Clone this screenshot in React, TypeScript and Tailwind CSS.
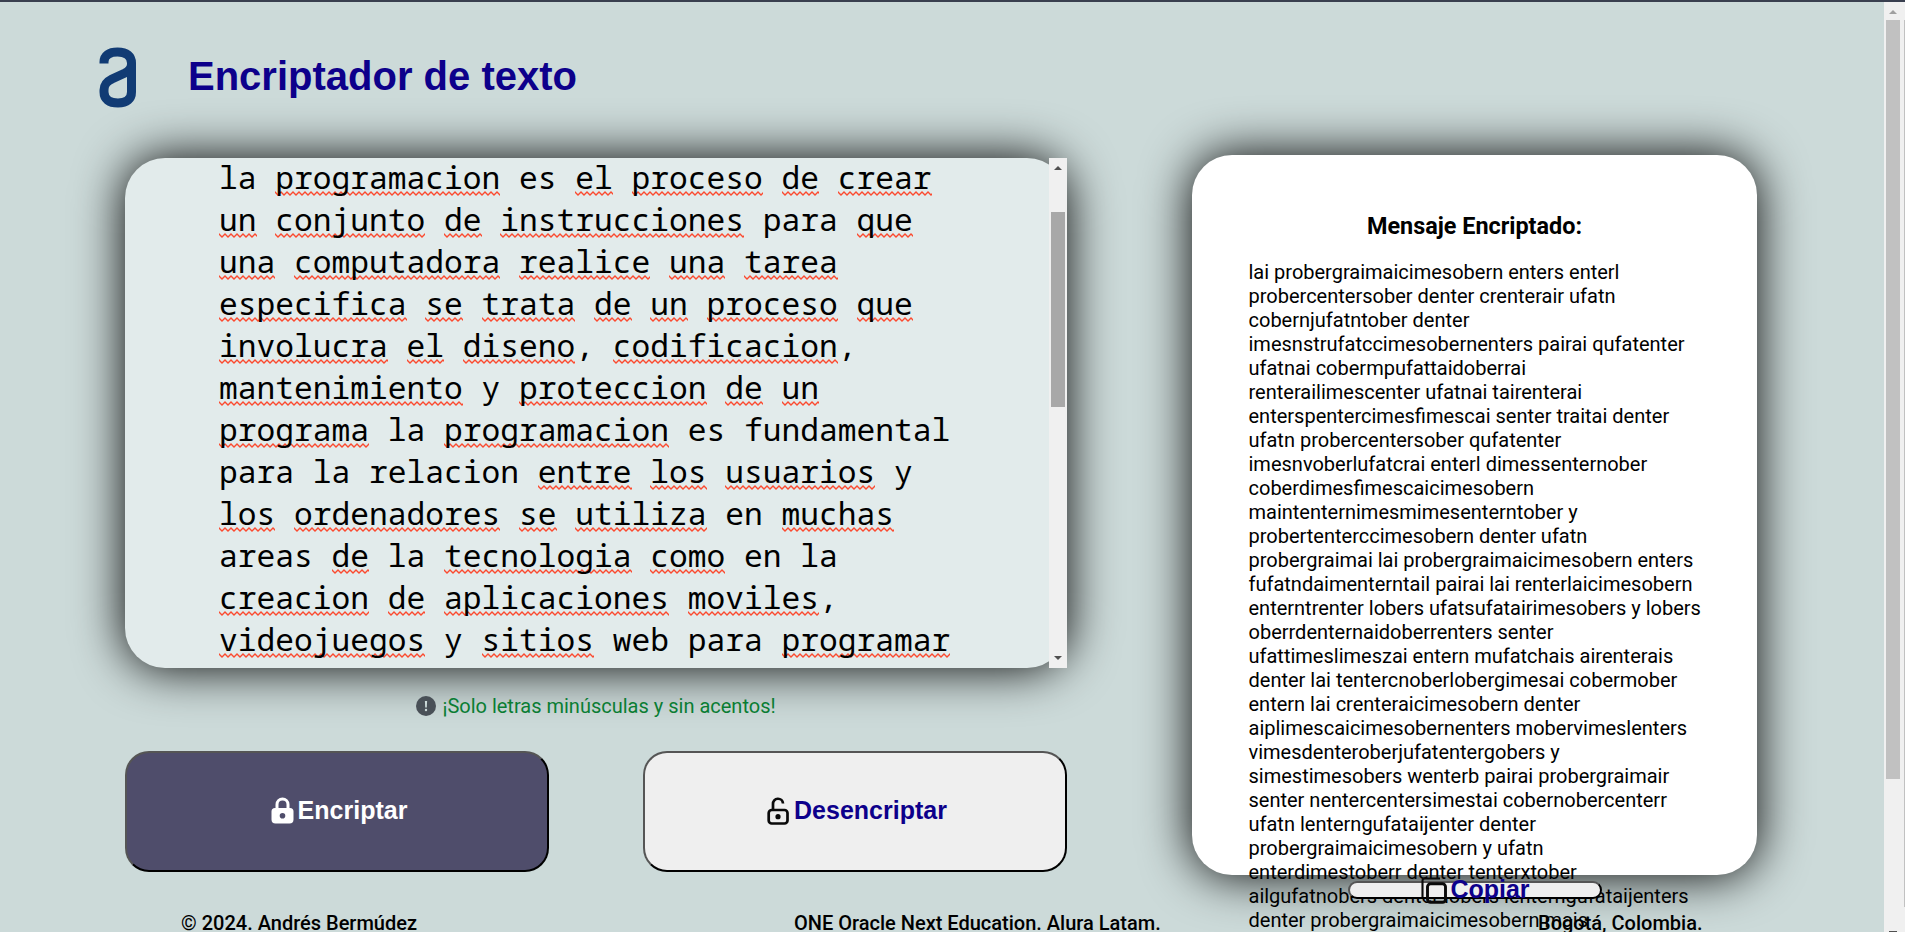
const LINES: string[] = [
  'la *programacion* es *el* *proceso* *de* *crear*',
  '*un* *conjunto* *de* *instrucciones* para *que*',
  '*una* *computadora* *realice* *una* *tarea*',
  '*especifica* *se* *trata* *de* *un* *proceso* *que*',
  '*involucra* *el* *diseno*, *codificacion*,',
  '*mantenimiento* y *proteccion* *de* *un*',
  '*programa* la *programacion* es fundamental',
  'para la relacion *entre* *los* *usuarios* y',
  '*los* *ordenadores* *se* *utiliza* en *muchas*',
  'areas *de* la *tecnologia* *como* en la',
  '*creacion* *de* *aplicaciones* *moviles*,',
  '*videojuegos* y *sitios* web para *programar*',
];

const ENCRYPTED: string[] = [
  'lai probergraimaicimesobern enters enterl',
  'probercentersober denter crenterair ufatn',
  'cobernjufatntober denter',
  'imesnstrufatccimesobernenters pairai qufatenter',
  'ufatnai cobermpufattaidoberrai',
  'renterailimescenter ufatnai tairenterai',
  'enterspentercimesfimescai senter traitai denter',
  'ufatn probercentersober qufatenter',
  'imesnvoberlufatcrai enterl dimessenternober',
  'coberdimesfimescaicimesobern',
  'maintenternimesmimesenterntober y',
  'probertenterccimesobern denter ufatn',
  'probergraimai lai probergraimaicimesobern enters',
  'fufatndaimenterntail pairai lai renterlaicimesobern',
  'enterntrenter lobers ufatsufatairimesobers y lobers',
  'oberrdenternaidoberrenters senter',
  'ufattimeslimeszai entern mufatchais airenterais',
  'denter lai tentercnoberlobergimesai cobermober',
  'entern lai crenteraicimesobern denter',
  'aiplimescaicimesobernenters mobervimeslenters',
  'vimesdenteroberjufatentergobers y',
  'simestimesobers wenterb pairai probergraimair',
  'senter nentercentersimestai cobernobercenterr',
  'ufatn lenterngufataijenter denter',
  'probergraimaicimesobern y ufatn',
  'enterdimestoberr denter tenterxtober',
  'ailgufatnobers denter lobers lenterngufataijenters',
  'denter probergraimaicimesobern mais',
];

// Words wrapped in asterisks are marked by the spell checker.
function SpellLine({ text }: { text: string }) {
  return (
    <div className="h-[42px] whitespace-pre">
      {text.split('*').map((part, i) =>
        i % 2 === 1 ? (
          <span
            key={i}
            className="bg-[url('data:image/svg+xml,%3Csvg%20xmlns=%22http://www.w3.org/2000/svg%22%20width=%226%22%20height=%225%22%3E%3Cpath%20d=%22M-3%204L0%201L3%204L6%201L9%204%22%20fill=%22none%22%20stroke=%22%23fb4a2f%22%20stroke-width=%221.300%22/%3E%3C/svg%3E')] bg-[length:6px_5px] bg-[position:0_35px] bg-repeat-x"
          >
            {part}
          </span>
        ) : (
          <span key={i}>{part}</span>
        ),
      )}
    </div>
  );
}

function Logo() {
  return (
    <svg className="h-[61px] w-[38px]" viewBox="0 0 38 61" fill="none" stroke="#113b74" strokeWidth="9">
      <path d="M5 16.500V15C5 8.500 10 5 18.500 5C28 5 32.500 9 32.500 16V45C32.500 52 28 56 19 56C10 56 5 52 5 45V43C5 37 8 34.500 13 32L26 26C30 24 32.500 21 32.500 17" />
    </svg>
  );
}

export default function App() {
  return (
    <div className="relative flex h-[932px] w-[1905px] overflow-hidden border-t-2 border-[#393f4f] bg-[#ccdad9] font-[Roboto,sans-serif] text-black">
      <div className="flex h-[930px] w-[1884px] flex-col">
        <header className="flex h-[153px] shrink-0 items-start pl-[99px] pt-[45px]">
          <Logo />
          <h1 className="ml-[51px] mt-[6px] text-[40px] font-bold leading-[46px] text-[#0d008b] [font-family:'Liberation_Sans',sans-serif]">
            Encriptador de texto
          </h1>
        </header>
        <main className="flex h-[743px] shrink-0 pl-[125px]">
          <section className="flex w-[942px] flex-col pt-[3px]">
            <div className="flex h-[510px] justify-between rounded-[40px] bg-[#e2ebeb] shadow-[0_0_50px_#000]">
              <div className="h-[510px] overflow-hidden pl-[94px] text-[31.25px] leading-[42px] [font-family:'Noto_Sans_Mono','Noto_Sans_Mono_CJK_SC',monospace]">
                <div className="-mt-0.5">
                  {LINES.map((l) => (
                    <SpellLine key={l} text={l} />
                  ))}
                </div>
              </div>
              <div className="flex w-[18px] flex-col items-center bg-[#f0f0f0]">
                <svg className="mt-2 h-1 w-2" viewBox="0 0 8 4"><path d="M4 0L8 4H0Z" fill="#505050" /></svg>
                <div className="mt-[42px] h-[195px] w-[14px] bg-[#a8a8a8]" />
                <svg className="mb-2 mt-auto h-1 w-2" viewBox="0 0 8 4"><path d="M0 0H8L4 4Z" fill="#505050" /></svg>
              </div>
            </div>
            <p className="mt-[26px] flex h-6 items-center pl-[291px] text-[20px] leading-6 text-[#0a7d33]">
              <svg className="mr-[6.5px] h-5 w-5" viewBox="0 0 20 20">
                <circle cx="10" cy="10" r="10" fill="#495057" />
                <path d="M8.900 5H11.100L10.800 11.500H9.200Z" fill="#ccdad9" />
                <circle cx="10" cy="14" r="1.200" fill="#ccdad9" />
              </svg>
              ¡Solo letras minúsculas y sin acentos!
            </p>
            <div className="mt-[33px] flex h-[121px] justify-between text-[25px] font-bold [font-family:'Liberation_Sans',sans-serif]">
              <button className="flex w-[424px] items-center justify-center rounded-[24px] border-2 border-b-black border-l-[#555] border-r-black border-t-[#555] bg-[#4f4d6b] pb-0.5 pl-1 text-white">
                <svg className="mr-[4px] h-[27px] w-[23px]" viewBox="0 0 23 27">
                  <path d="M6 13V7.500a5.500 5.500 0 0 1 11 0V13" fill="none" stroke="#fff" strokeWidth="3" />
                  <path fillRule="evenodd" fill="#fff" d="M4 11H19Q22.500 11 22.500 14.500V22.500Q22.500 26.500 18.500 26.500H4.500Q.5 26.500 .5 22.500V14.500Q.5 11 4 11ZM11.500 16a2.800 2.800 0 1 0 0 5.600a2.800 2.800 0 1 0 0-5.600Z" />
                </svg>
                Encriptar
              </button>
              <button className="flex w-[424px] items-center justify-center rounded-[24px] border-2 border-b-black border-l-[#555] border-r-black border-t-[#555] bg-[#efefef] pb-0.5 pl-1 text-[#0d008b]">
                <svg className="mr-[5px] h-[28px] w-[22px]" viewBox="0 0 22 28" fill="none" stroke="#0a0a0a" strokeWidth="2.700">
                  <rect x="1.700" y="13" width="18.800" height="13.500" rx="3" />
                  <path d="M6 13V7a5 5 0 0 1 10-.5" />
                  <circle cx="11" cy="19.700" r="2.600" fill="#0a0a0a" stroke="none" />
                </svg>
                Desencriptar
              </button>
            </div>
          </section>
          <section className="ml-[125px] w-[565px]">
            <div className="h-[720px] rounded-[40px] bg-white pl-[56.5px] pt-[57px] shadow-[0_0_50px_#000]">
              <h2 className="w-[452px] text-center text-[23.400px] font-bold leading-7">Mensaje Encriptado:</h2>
              <div className="mt-[20px] whitespace-pre text-[20px] leading-6">
                {ENCRYPTED.map((l) => (
                  <div key={l}>{l}</div>
                ))}
              </div>
            </div>
            <button className="relative ml-[155.5px] mt-[6px] flex h-[18px] w-[254px] items-center justify-center rounded-[10px] border-2 border-b-black border-l-[#555] border-r-black border-t-[#555] bg-[#efefef] pl-0.5 text-[25px] font-bold text-[#0d008b] [font-family:'Liberation_Sans',sans-serif]">
              <svg className="mr-[3px] h-[27px] w-[26px] shrink-0" viewBox="0 0 26 27" fill="none" stroke="#0a0a0a" strokeWidth="2.900">
                <rect x="6.500" y="6.800" width="18" height="18.500" rx="3" />
                <path d="M1.500 20V4Q1.500 1.500 4 1.500H19" strokeWidth="2.100" />
              </svg>
              Copiar
            </button>
          </section>
        </main>
        <footer className="relative -mt-px flex h-[35px] shrink-0 text-[20px] font-medium leading-[54px]">
          <span className="-mt-px ml-[181px] w-[613px]">© 2024. Andrés Bermúdez</span>
          <span className="-mt-px w-[744px]">ONE Oracle Next Education. Alura Latam.</span>
          <span className="-mt-px">Bogotá, Colombia.</span>
        </footer>
      </div>
      <aside className="flex w-[18px] flex-col items-center bg-[#f0f0f0]">
        <svg className="mt-2 h-1 w-2" viewBox="0 0 8 4"><path d="M4 0L8 4H0Z" fill="#a0a0a0" /></svg>
        <div className="mt-[6px] h-[759px] w-[14px] bg-[#c1c1c1]" />
        <div className="mt-auto h-px w-2 bg-[#505050]" />
      </aside>
      <div className="flex w-[3px] justify-end bg-[#f0f0f0] pt-[18px]">
        <div className="h-[887px] w-px bg-[#c1c1c1]" />
      </div>
    </div>
  );
}
